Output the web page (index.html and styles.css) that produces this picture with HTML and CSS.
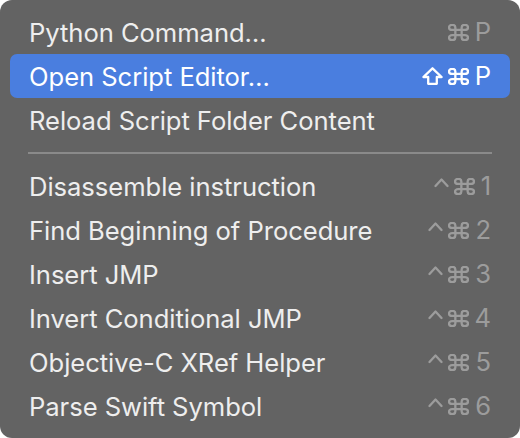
FILE: index.html
```html
<!DOCTYPE html>
<html>
<head>
<meta charset="utf-8">
<link rel="stylesheet" href="styles.css">
</head>
<body>
<div class="menu">
  <div class="item"><span class="label">Python Command…</span><span class="keys"><svg class="cmd" viewBox="2 2 20 20" preserveAspectRatio="none"><path d="M15 6v12a3 3 0 1 0 3-3H6a3 3 0 1 0 3 3V6a3 3 0 1 0-3 3h12a3 3 0 1 0-3-3"/></svg><span class="ch">P</span></span></div>
  <div class="item active"><span class="label">Open Script Editor…</span><span class="keys"><svg class="shift" viewBox="0 0 21 18"><path d="M10.5 1.3 L19.6 10 H14.8 V16.8 H6.2 V10 H1.4 Z"/></svg><svg class="cmd" viewBox="2 2 20 20" preserveAspectRatio="none"><path d="M15 6v12a3 3 0 1 0 3-3H6a3 3 0 1 0 3 3V6a3 3 0 1 0-3 3h12a3 3 0 1 0-3-3"/></svg><span class="ch">P</span></span></div>
  <div class="item"><span class="label">Reload Script Folder Content</span></div>
  <div class="sep"></div>
  <div class="item"><span class="label">Disassemble instruction</span><span class="keys"><svg class="ctrl" viewBox="0 0 15 18"><path d="M1.5 9 L7.5 2.5 L13.5 9"/></svg><svg class="cmd" viewBox="2 2 20 20" preserveAspectRatio="none"><path d="M15 6v12a3 3 0 1 0 3-3H6a3 3 0 1 0 3 3V6a3 3 0 1 0-3 3h12a3 3 0 1 0-3-3"/></svg><span class="ch">1</span></span></div>
  <div class="item"><span class="label">Find Beginning of Procedure</span><span class="keys"><svg class="ctrl" viewBox="0 0 15 18"><path d="M1.5 9 L7.5 2.5 L13.5 9"/></svg><svg class="cmd" viewBox="2 2 20 20" preserveAspectRatio="none"><path d="M15 6v12a3 3 0 1 0 3-3H6a3 3 0 1 0 3 3V6a3 3 0 1 0-3 3h12a3 3 0 1 0-3-3"/></svg><span class="ch">2</span></span></div>
  <div class="item"><span class="label">Insert JMP</span><span class="keys"><svg class="ctrl" viewBox="0 0 15 18"><path d="M1.5 9 L7.5 2.5 L13.5 9"/></svg><svg class="cmd" viewBox="2 2 20 20" preserveAspectRatio="none"><path d="M15 6v12a3 3 0 1 0 3-3H6a3 3 0 1 0 3 3V6a3 3 0 1 0-3 3h12a3 3 0 1 0-3-3"/></svg><span class="ch">3</span></span></div>
  <div class="item"><span class="label">Invert Conditional JMP</span><span class="keys"><svg class="ctrl" viewBox="0 0 15 18"><path d="M1.5 9 L7.5 2.5 L13.5 9"/></svg><svg class="cmd" viewBox="2 2 20 20" preserveAspectRatio="none"><path d="M15 6v12a3 3 0 1 0 3-3H6a3 3 0 1 0 3 3V6a3 3 0 1 0-3 3h12a3 3 0 1 0-3-3"/></svg><span class="ch">4</span></span></div>
  <div class="item"><span class="label">Objective-C XRef Helper</span><span class="keys"><svg class="ctrl" viewBox="0 0 15 18"><path d="M1.5 9 L7.5 2.5 L13.5 9"/></svg><svg class="cmd" viewBox="2 2 20 20" preserveAspectRatio="none"><path d="M15 6v12a3 3 0 1 0 3-3H6a3 3 0 1 0 3 3V6a3 3 0 1 0-3 3h12a3 3 0 1 0-3-3"/></svg><span class="ch">5</span></span></div>
  <div class="item"><span class="label">Parse Swift Symbol</span><span class="keys"><svg class="ctrl" viewBox="0 0 15 18"><path d="M1.5 9 L7.5 2.5 L13.5 9"/></svg><svg class="cmd" viewBox="2 2 20 20" preserveAspectRatio="none"><path d="M15 6v12a3 3 0 1 0 3-3H6a3 3 0 1 0 3 3V6a3 3 0 1 0-3 3h12a3 3 0 1 0-3-3"/></svg><span class="ch">6</span></span></div>
</div>
</body>
</html>
```
FILE: styles.css
```css
html, body {
  margin: 0;
  padding: 0;
  background: #ffffff;
}
body {
  font-family: Inter, "Noto Sans", sans-serif;
}
.menu {
  width: 520px;
  height: 438px;
  box-sizing: border-box;
  background: #636363;
  border-radius: 12px;
  padding: 10px 10px;
  display: flex;
  flex-direction: column;
}
.item {
  height: 44px;
  display: flex;
  align-items: center;
  justify-content: space-between;
  padding: 0 19px;
  border-radius: 7px;
  color: #eeeeee;
  font-size: 25.6px;
  letter-spacing: -0.05px;
}
.item.active {
  background: #4a7edf;
  color: #ffffff;
}
.keys {
  display: flex;
  align-items: center;
  color: #9c9c9c;
  gap: 5px;
}
.active .keys {
  color: #ffffff;
}
.keys svg {
  height: 18px;
  fill: none;
  stroke: currentColor;
  stroke-width: 2.3;
  stroke-linejoin: round;
  stroke-linecap: round;
}
.keys .cmd path { vector-effect: non-scaling-stroke; }
.keys .cmd { width: 21px; height: 17px; }
.keys .shift { width: 21px; }
.keys .ctrl { width: 15px; }
.keys .ch {
  margin-left: 1px;
  line-height: 1;
}
.sep {
  height: 22px;
  display: flex;
  align-items: center;
  padding: 0 18px;
}
.sep::before {
  content: "";
  flex: 1;
  height: 2px;
  background: #8a8a8a;
}
```
